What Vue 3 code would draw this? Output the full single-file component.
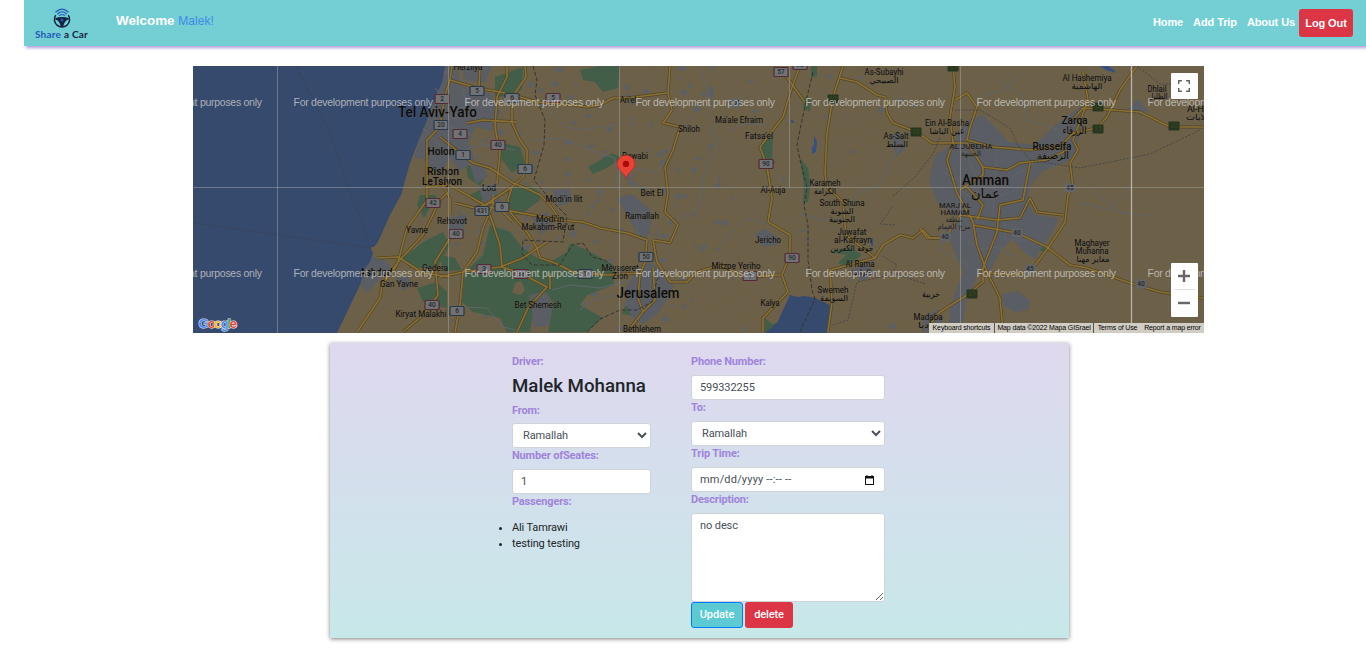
<script setup>
import { ref } from 'vue'

const from = ref('Ramallah')
const to = ref('Ramallah')
const phone = ref('599332255')
const seats = ref('1')
const description = ref('no desc')
const passengers = ['Ali Tamrawi', 'testing testing']

const green = [
  '495,77 523,67 522,90 508,96 495,97', '580,70 600,66 620,66 618,88 603,92 595,82 583,80',
  '503,143 520,147 525,163 512,173 500,157', '588,167 612,153 622,158 607,168 593,174',
  '507,187 530,186 540,192 540,200 520,215 510,214', '447,133 458,125 463,137 455,149',
  '466,166 480,164 487,175 480,186 468,178',
  '490,225 510,232 523,248 537,258 550,262 567,252 570,243 587,250 613,265 614,285 587,295 580,305 603,318 587,332 507,332 500,318 473,312 462,302 465,272 483,255',
  '420,195 437,195 424,218 417,205', '403,258 423,242 443,232 450,245 437,268 410,268', '417,288 437,282 447,292 447,308 423,302',
  '470,195 483,188 490,195 480,202', '440,255 455,258 462,270 443,271',
  '762,142 773,137 772,158 776,163 761,161', '811,66 817,66 817,76 811,78', '805,97 811,100 810,112 803,108',
  '800,158 808,168 810,187 808,202 803,204 804,187', '828,252 850,247 862,255 845,267 838,263 846,255',
  '765,318 772,324 780,322 775,332 764,332', '970,230 975,240 986,237 984,241 974,243', '1040,246 1047,245 1048,252 1040,251', '625,306 640,308 635,316 622,314'
]
const urban = [
  '444,66 457,66 460,86 490,93 500,112 492,131 476,127 468,143 475,160 460,171 449,158 441,175 423,159 414,158 420,137 428,117 437,95',
  '460,66 492,66 485,83 466,80', '470,165 483,163 487,177 476,184', '448,218 468,214 462,233 448,235', '478,187 495,184 500,202 486,207',
  '365,257 382,257 391,267 376,283 366,294 360,283', '396,277 408,276 412,284 402,291',
  '617,198 632,194 651,210 650,233 642,241 632,224', '625,290 637,270 650,262 662,271 674,284 667,299 658,313 643,324 632,318 627,305',
  '530,295 545,292 553,307 548,326 534,327', '552,190 570,189 572,202 558,206', '532,218 547,212 553,226 541,235',
  '755,235 764,228 781,240 776,246 762,246', '707,87 713,87 714,97 709,99', '890,134 902,133 905,149 896,157', '850,270 866,264 876,273 862,281',
  '935,155 952,145 966,121 983,115 998,130 1008,142 1035,145 1054,126 1070,114 1082,106 1084,121 1078,140 1075,158 1060,164 1041,172 1030,187 1028,203 1036,215 1058,218 1054,230 1040,250 1036,259 1026,254 1012,239 1001,250 990,271 979,270 973,286 966,303 961,332 948,332 950,307 963,272 953,248 945,230 956,216 937,203 929,180',
  '1002,294 1018,291 1030,301 1028,310 1014,312 1004,306', '1128,109 1138,99 1148,111 1143,116', '923,318 939,309 943,322 934,332 922,332'
]
// Open ground inside the forested hills.
const clearings = ['515,283 521,281 525,290 521,295 512,293', '529,296 545,291 553,303 548,333 530,333 533,313', '463,309 477,315 486,325 490,333 462,333']
const roads = [
  '452,66 450,80 477,88 500,92 520,97 537,102 573,105 587,107 600,105 613,98 627,98 667,93',
  '525,66 526,77 512,97 512,123 520,140 527,150 527,167 523,177 512,187 508,200 510,212 527,232 537,248 540,258 555,263 573,272 607,275 640,273',
  '440,137 460,153 473,163 490,168 513,183 530,190 540,195 550,205 560,220 583,222 600,228 627,233 647,240',
  '507,66 507,77 497,97 495,127 500,153 497,183', '467,123 483,120 517,122',
  '670,66 668,93 672,110 663,123 680,127 673,150 665,167 668,193 665,212 678,225 670,243 653,240',
  '493,195 493,205 483,228 477,252 463,272 460,305 455,332', '440,277 463,272 500,267 523,258 547,242', '490,215 500,245 502,267 520,273 547,287 528,308 517,332', '550,273 550,289',
  '647,240 645,262 640,275 638,298 643,312 627,332', '653,240 657,262 670,282 687,282 697,272 720,265 747,277 780,275', '653,267 655,300 643,312',
  '450,80 445,95 440,127 427,140 427,200 407,228 398,262 382,285 380,298 357,332', '377,258 398,257 423,273 450,277', '448,192 440,200 423,235 398,262 394,270', '450,238 435,262 438,295 423,315 403,332',
  '427,187 450,185 488,207 560,220', '455,203 475,208 493,202 513,222', '480,66 479,88', '512,187 485,205', '440,180 450,199 450,214',
  '800,66 792,87 783,117 760,147 767,167 772,198 768,222 790,235 790,255 782,275 788,292 763,318 763,332', '783,72 807,105',
  '843,66 833,97 827,133 825,173 827,187 843,202 846,235 860,246 875,258 830,270 832,302 828,332', '875,258 883,245 900,235 913,238 923,230 930,238 943,238',
  '840,78 857,82 877,95 885,97 887,113 893,123 917,132 932,143 967,143 983,167 1007,170 1020,163 1047,160 1067,150',
  '953,66 955,87 950,117 953,143 947,160 957,193 973,222 977,245 987,272 1000,298 1003,332',
  '955,100 967,93 977,107 970,127 967,140 993,147 1030,150 1060,147 1073,133 1097,128 1107,117 1120,90 1137,66',
  '1073,120 1083,108 1140,112 1170,127 1203,127', '1083,72 1088,100 1073,140 1078,150 1070,163 1073,187 1068,195 1065,222 1048,248 1033,268 1017,275 990,273',
  '960,190 983,175 983,167', '1030,163 1023,200 1000,205 997,232 983,268 983,282 967,295 940,312 927,328', '920,228 927,238 945,238 960,215 997,220 1020,218 1030,198 1037,212 1063,215',
  '973,225 1017,233 1047,247 1070,265 1087,268 1127,282 1160,292 1203,298', '967,187 983,205 977,220'
]
const borders = [
  '533,66 537,80 535,95 545,120 544,145 534,180 548,197 567,216 563,242 540,241 523,240 522,254 532,265 560,265 572,245 583,243 592,257 605,260 613,267',
  '587,332 600,319 620,310 637,310 652,302 657,280 665,270', '813,72 807,97 801,125 797,145 800,160 807,187 804,205 808,225 808,260 812,290 815,299 803,325 800,332'
]
const dotted = [
  '296,66 330,133 370,248', '193,223 280,235 372,248', '955,110 980,110 1010,128 1018,145 1030,160 1080,168 1150,154 1200,130', '1137,66 1160,84 1175,84',
  '893,206 880,224 895,225', '883,256 897,265 890,275 857,282 848,320 832,325', '890,272 925,284', '893,196 915,177 933,154 940,137'
]
const minor = [
  '450,105 470,109 490,105', '460,66 464,95 476,123', '440,125 463,130 485,145 515,150', '530,140 562,138 590,150 615,158 618,190', '545,105 564,126 580,130 620,124',
  '450,160 470,148 500,142', '620,180 638,168 652,173 668,160', '552,290 570,285 600,288 630,280', '463,307 487,308 503,327 520,331',
  '580,310 590,301 617,295', '620,210 635,217 640,239', '650,210 658,235 670,255', '700,68 709,90 710,120 718,148 705,170 698,208 680,219',
  '720,245 745,218 770,224', '730,130 745,123 766,125', '800,214 824,220 847,218', '845,215 858,193 880,185 890,162 903,143', '980,97 1003,90 1022,73', '1000,82 1022,94 1026,120 1060,130',
  '948,182 970,197 1000,196 1022,188', '965,238 980,249 995,247 1016,257', '968,265 940,250 941,225', '1078,202 1109,210 1129,188', '1090,190 1120,212 1152,216',
  '435,88 458,117', '430,110 457,119', '443,72 472,84', '423,128 446,151', '965,150 980,187', '997,155 993,215', '1012,177 1045,157', '940,170 995,201', '1005,220 1005,240 1030,240'
]

// [text, centre x, baseline y, size, drawn width]
const places = [
  ['Tel Aviv-Yafo', 437.5, 116.5, 13, 79], ['Herzliya', 468, 70, 8, 29], ['Holon', 441, 155, 9.5, 27], ['Rishon', 443, 174.5, 9.5, 32], ['LeTsiyon', 442, 185, 9.5, 40],
  ['Lod', 489, 191, 8, 14], ["Modi'in Ilit", 564, 202, 8, 37], ["Modi'in", 550, 222, 8, 28], ["Makabim-Re'ut", 548, 230, 8, 53], ['Rehovot', 452, 224, 8, 30],
  ['Yavne', 417, 233, 8, 22], ['Ashdod', 376, 276, 9.5, 33], ['Gan Yavne', 399, 287, 8, 38], ['Gedera', 435, 271, 8, 26], ['Kiryat Malakhi', 421, 317, 8, 51],
  ['Bet Shemesh', 538, 308, 8, 47], ["Ari'el", 628, 103, 8, 16], ['Rawabi', 635, 158.5, 8, 26], ['Shiloh', 689, 132, 8, 22], ['Beit El', 652, 196, 8, 23],
  ['Ramallah', 642, 218.5, 8, 34], ['Mevaseret', 620, 271, 8, 37], ['Zion', 620, 279, 8, 16], ['Jerusalem', 648, 298, 13, 63], ['Bethlehem', 642, 332, 8, 38],
  ["Ma'ale Efraim", 739, 123, 8, 48], ["Fatsa'el", 759, 138.5, 8, 28], ['Al-Auja', 773, 193, 8, 25], ['Karameh', 825, 186, 8, 31], ['الكرامة', 825, 194, 8, 22],
  ['As-Subayhi', 884, 75, 8, 39], ['الصبيحي', 884, 83, 8, 29], ['As-Salt', 896, 139, 8, 25], ['السلط', 897, 147, 8, 22], ['Ein Al-Basha', 947, 126, 8, 44], ['عين الباشا', 947, 134, 8, 35],
  ['Jericho', 768, 243, 8, 26], ['Mitzpe Yeriho', 736, 269, 8, 49], ['Kalya', 770, 306, 8, 19], ['South Shuna', 842, 206, 8, 45], ['الشونة', 842, 214, 8, 23], ['الجنوبية', 842, 222, 8, 26],
  ['Juwafat', 852, 235, 8, 29], ['al-Kafrayn', 853, 243, 8, 38], ['جوفة الكفرين', 852, 251, 8, 43], ['Al Rama', 860, 267, 8, 29], ['الرامة', 861, 275, 8, 20], ['Swemeh', 833, 293, 8, 31], ['السويمة', 834, 301, 8, 28],
  ['Al Hashemiya', 1087, 81, 8, 49], ['الهاشمية', 1087, 89, 8, 31], ['Dhlail', 1157, 91.5, 8, 19], ['الظليل', 1158, 99, 8, 19], ['Al-Hallabat', 1209, 112, 8, 44], ['الحلابات', 1202, 120, 8, 32],
  ['Zarqa', 1074.5, 124, 9.5, 26], ['الزرقاء', 1074.5, 134, 9.5, 24], ['Russeifa', 1052, 149.5, 9.5, 39], ['الرصيفة', 1053, 159, 9.5, 32],
  ['AL JUBEIHA', 971, 149, 7, 43], ['الجبيهة', 971, 156, 7, 20], ['Amman', 985.5, 185, 14, 47], ['عمان', 985.5, 198, 13, 29],
  ['MARJ AL', 955, 208, 7, 32], ['HAMAM', 955, 215, 7, 29], ['منطقة', 954, 222, 7, 17], ['مرج الحمام', 954, 229, 7, 33],
  ['Maghayer', 1092, 246, 8, 35], ['Muhanna', 1092, 254, 8, 33], ['مغاير مهنا', 1093, 262, 8, 33], ['خربية', 931, 297, 8, 18], ['Madaba', 928, 320, 8, 29], ['مأدبا', 928, 328, 8, 20]
]

// [label, centre x, centre y, kind]
const shields = [
  ['2', 442, 99, 'r'], ['20', 441, 125, 'b'], ['5', 477, 91, 'b'], ['6', 512, 98, 'b'], ['5', 553, 98, 'r'], ['4', 460, 134, 'r'], ['40', 498, 145, 'r'], ['1', 463, 155, 'b'], ['6', 525, 169, 'b'],
  ['42', 433, 203, 'r'], ['431', 482, 211, 'b'], ['6', 502, 207, 'b'], ['40', 456, 234, 'r'], ['3', 484, 269, 'r'], ['38', 521, 274, 'r'], ['1', 585, 274, 'b'], ['50', 646, 257, 'b'], ['40', 432, 305, 'r'], ['6', 457, 311, 'b'],
  ['57', 781, 72, 'r'], ['90', 800, 65, 'r'], ['90', 766, 164, 'r'], ['90', 792, 258, 'r'], ['1', 750, 276, 'r'], ['505', 735, 103, 'p'],
  ['65', 833, 99, 'g'], ['30', 916, 132, 'g'], ['35', 953, 67, 'g'], ['30', 1098, 107, 'g'], ['15', 1098, 129, 'g'], ['30', 1174, 126, 'g'], ['35', 972, 294, 'g'],
  ['45', 1070, 188, 'p'], ['40', 945, 237, 'p'], ['40', 1017, 233, 'p'], ['45', 1030, 269, 'p'], ['40', 1141, 284, 'p']
]
const shieldWidth = (s) => (s[3] === 'g' || s[3] === 'p' ? 11 : 14)

// Small settlements scattered over the land, from a fixed seed.
let seed = 11
const rand = () => ((seed = (seed * 16807) % 2147483647) / 2147483647)
const specks = Array.from({ length: 250 }, () => {
  const x = 425 + rand() * (rand() > 0.25 ? 290 : 500)
  const y = 66 + rand() * 266
  const w = 1.5 + rand() * 5
  const h = 1 + rand() * 3.5
  return `M${x} ${y}l${w} ${-h}l${w / 2} ${h}l${-w / 2} ${h * 0.8}z`
}).join('')
const hills = Array.from({ length: 110 }, () => {
  const x = 640 + rand() * 300
  const y = 66 + rand() * 266
  const w = 3 + rand() * 9
  return `M${x} ${y}l${w} ${-w * 0.5}l2 2z`
}).join('')

const marks = []
for (const y of [106, 276.5]) for (const x of [122.5, 293.5, 464.5, 635.5, 805.5, 976.5, 1147.5]) marks.push([x, y])
</script>

<template>
  <div class="page">
    <header class="navbar">
      <div class="brand">
        <svg class="brand-icon" width="20" height="21" viewBox="0 0 20 21" fill="none">
          <g stroke="#2458b8" stroke-width="1.1" stroke-linecap="round">
            <path d="M3.8 4Q10-1.8 16.200 4" /><path d="M5.600 6Q10 1.600 14.400 6" /><path d="M7.500 7.700Q10 5.300 12.500 7.700" />
          </g>
          <path d="M3.700 7.200a7.600 7.600 0 1 0 12.600 0" stroke="#14233f" stroke-width="1.500" />
          <path d="M3 10.200Q10 8 17 10.200L16.500 11.600Q12.500 12.500 11.200 18.800H8.800Q7.500 12.500 3.500 11.600z" fill="#14233f" />
          <circle cx="10" cy="11.900" r="1.500" fill="#2458b8" />
        </svg>
        <div class="brand-name"><span>Share</span> a Car</div>
      </div>
      <div class="welcome"><b>Welcome</b> <span>Malek!</span></div>
      <nav class="links">
        <a>Home</a><a>Add Trip</a><a>About Us</a>
        <button class="logout">Log Out</button>
      </nav>
    </header>

    <section class="map">
      <svg class="canvas" width="1011" height="267" viewBox="193 66 1011 267">
        <rect x="193" y="66" width="1011" height="267" fill="#6c6049" />
        <path :d="hills" fill="#70623e" opacity=".65" />
        <path :d="specks" fill="#5d5f62" />
        <polygon v-for="p in green" :key="p" :points="p" fill="#435e48" />
        <polygon v-for="p in clearings" :key="p" :points="p" fill="#6c6049" />
        <polygon v-for="p in urban" :key="p" :points="p" fill="#5a5d63" />
        <polygon points="193,66 445,66 442,83 437,93 428,117 424,128 420,137 410,163 401,195 390,215 378,242 374,247 370,247 373,253 370,262 365,268 360,285 337,333 193,333" fill="#364a6e" />
        <polygon points="790,295 798,297 805,296 815,298 830,305 827,333 765,333 777,323" fill="#364a6e" />
        <path d="M814 135l3 7-1 10-4 2 0-6 2-4zM791 120l2 0 1 3-3 0zM871 240l2-2v8l-2 0zM1100 66h8l6 4 2 3-10-3z" fill="#364f85" />
        <g fill="none" stroke="#60656b" stroke-width="1"><polyline v-for="p in minor" :key="p" :points="p" /></g>
        <g fill="none" stroke="#514528" stroke-width="3" stroke-linejoin="round"><polyline v-for="p in roads" :key="p" :points="p" /></g>
        <g fill="none" stroke="#8b7032" stroke-width="1.600" stroke-linejoin="round"><polyline v-for="p in roads" :key="p" :points="p" /></g>
        <g fill="none" stroke="#34342f" stroke-width="1" stroke-dasharray="4 2"><polyline v-for="p in borders" :key="p" :points="p" /></g>
        <g fill="none" stroke="#3c4048" stroke-width=".8" stroke-dasharray="2 1.5"><polyline v-for="p in dotted" :key="p" :points="p" /></g>
        <g v-for="(s, i) in shields" :key="'s' + i" :class="['shield', s[3]]">
          <rect :x="s[1] - shieldWidth(s) / 2" :y="s[2] - 4.5" :width="shieldWidth(s)" height="9" rx="1" />
          <text :x="s[1]" :y="s[2] + 2.4">{{ s[0] }}</text>
        </g>
        <text v-for="(p, i) in places" :key="'p' + i" class="place" :class="{ big: p[3] > 9, district: p[3] === 7, arabic: p[0] > '\u0600' }" :x="p[1]" :y="p[2]" :font-size="p[3] * 1.06" :textLength="p[4]" lengthAdjust="spacingAndGlyphs">{{ p[0] }}</text>
        <g stroke="#a2a4a3" stroke-opacity=".5" stroke-width="1">
          <path d="M277.5 66V333M448.5 66V333M619.5 66V333M789.5 66V187M960.5 66V333M193 187.5H1204" />
          <path d="M1131.5 66V333" stroke="#c2beb2" stroke-opacity=".9" stroke-width="1.3" />
        </g>
        <text v-for="(m, i) in marks" :key="'m' + i" class="mark" :x="m[0]" :y="m[1]" textLength="139.500">For development purposes only</text>
        <path d="M626 179C625 172 617.200 170.500 617.200 164A8.800 8.800 0 0 1 634.800 164C634.800 170.500 627 172 626 179z" fill="#ea4335" stroke="#c5221f" stroke-width=".6" />
        <circle cx="626" cy="163.900" r="3.200" fill="#a50e0e" />
        <text class="google" x="198.500" y="327.500" textLength="38.500"><tspan fill="#4c8bf5">G</tspan><tspan fill="#e94b3c">o</tspan><tspan fill="#f6bd27">o</tspan><tspan fill="#4c8bf5">g</tspan><tspan fill="#3ba65a">l</tspan><tspan fill="#e94b3c">e</tspan></text>
      </svg>
      <button class="fullscreen" aria-label="Toggle fullscreen view">
        <svg width="12" height="12" viewBox="0 0 12 12" fill="none" stroke="#666" stroke-width="1.500"><path d="M.75 4V.75H4M8 .75h3.250V4M11.250 8v3.250H8M4 11.250H.75V8" /></svg>
      </button>
      <div class="zoom">
        <button aria-label="Zoom in"><svg width="12" height="12"><path d="M0 6H12M6 0V12" stroke="#666" stroke-width="2.400" /></svg></button>
        <i></i>
        <button aria-label="Zoom out"><svg width="12" height="12"><path d="M0 6H12" stroke="#666" stroke-width="2.400" /></svg></button>
      </div>
      <div class="credits">
        <span class="c1">Keyboard shortcuts</span><span class="c2">Map data ©2022 Mapa GISrael</span><span class="c3">Terms of Use</span><span class="c4">Report a map error</span>
      </div>
    </section>

    <form class="card" @submit.prevent>
      <div class="col left">
        <label>Driver:</label>
        <h5>Malek Mohanna</h5>
        <label>From:</label>
        <select v-model="from"><option>Ramallah</option></select>
        <label>Number ofSeates:</label>
        <input v-model="seats" type="text" />
        <label>Passengers:</label>
        <ul><li v-for="p in passengers" :key="p">{{ p }}</li></ul>
      </div>
      <div class="col right">
        <label>Phone Number:</label>
        <input v-model="phone" type="text" />
        <label>To:</label>
        <select v-model="to"><option>Ramallah</option></select>
        <label>Trip Time:</label>
        <div class="datetime" tabindex="0">
          <span>mm/dd/yyyy --:-- --</span>
          <svg width="9" height="10" viewBox="0 0 9 10"><path d="M1.500 0h1v1h4V0h1v1H9v9H0V1h1.500zM1 3.500V9h7V3.500z" fill="#111" fill-rule="evenodd" /></svg>
        </div>
        <label>Description:</label>
        <textarea v-model="description"></textarea>
        <div class="actions">
          <button class="update">Update</button>
          <button class="delete">delete</button>
        </div>
      </div>
    </form>
  </div>
</template>

<style>
body { background: #fff; overflow: hidden; }
</style>

<style scoped>
* { box-sizing: border-box; }
.page { height: 653px; font-family: Roboto, "Liberation Sans", sans-serif; font-size: 11px; color: #212529; overflow: hidden; }
button { font: inherit; border: 0; padding: 0; }

.navbar { display: flex; align-items: flex-start; height: 46px; margin-left: 24px; padding-right: 13px; background: #73cfd3; box-shadow: 2px 2px 3px #b39ddb; font-family: "Liberation Sans", Arial, sans-serif; }
.brand { width: 75px; padding-top: 8px; display: flex; flex-direction: column; align-items: center; }
.brand-name { font: bold 10px/11px Lato, sans-serif; letter-spacing: .25px; color: #14233f; white-space: nowrap; }
.brand-name span { color: #2458b8; }
.brand-icon { display: block; }
.welcome { margin: 12px 0 0 17px; font-size: 13.4px; line-height: 17px; color: #fff; }
.welcome span { color: #3f8ae8; font-size: 12.1px; }
.links { display: flex; margin-left: auto; padding-top: 9px; color: #fff; font-weight: bold; font-size: 11px; line-height: 27px; letter-spacing: -.1px; }
.links a { margin-right: 10px; }
.links a:nth-child(3) { margin-right: 4px; }
.logout { width: 54px; height: 28px; border-radius: 3px; background: #dc3545; color: #fff; letter-spacing: -.1px; }

.map { position: relative; width: 1011px; height: 267px; margin: 20px 0 0 193px; overflow: hidden; }
.canvas { display: block; }
.place { text-anchor: middle; fill: #0c0c0c; font-family: Roboto, "DejaVu Sans", sans-serif; paint-order: stroke; stroke: #6a6250; stroke-width: 1px; stroke-opacity: .4; }
.place.big { font-weight: 500; }
.place.district { fill: #202225; font-weight: 500; }
.place.arabic { font-family: "DejaVu Sans", sans-serif; font-weight: 400; }
.mark { font: 10.500px "Liberation Sans", Arial, sans-serif; fill: #d2d1cc; fill-opacity: .78; }
.shield text { font: 500 6.500px Roboto, sans-serif; text-anchor: middle; fill: #242930; }
.shield rect { fill: #717274; stroke-width: 1.200px; }
.shield.b rect { stroke: #28384b; }
.shield.r rect { stroke: #542936; }
.shield.g rect { fill: #263621; stroke: none; }
.shield.g text { fill: #3b431f; }
.shield.p rect { fill: #626466; stroke: none; }
.google { font: bold 13.500px "Liberation Sans", Arial, sans-serif; paint-order: stroke; stroke: #e6e9ef; stroke-width: 1px; }
.fullscreen { position: absolute; right: 6px; top: 7px; width: 27px; height: 26px; padding-right: 1px; display: grid; place-items: center; background: #fff; border-radius: 1px; }
.zoom { position: absolute; right: 6px; top: 197px; width: 27px; height: 54px; background: #fff; border-radius: 1px; display: flex; flex-direction: column; align-items: center; }
.zoom button { width: 27px; height: 26px; padding-right: 1px; display: grid; place-items: center; background: none; }
.zoom i { width: 20px; height: 1px; background: #e0e0e0; }
.credits { position: absolute; right: 0; bottom: 0; display: flex; width: 275px; height: 10px; background: #d1cdc4; font: 7px/10px "Liberation Sans", Arial, sans-serif; letter-spacing: -.14px; color: #000; white-space: nowrap; }
.credits span { text-align: center; }
.c1, .c2 { border-right: 1px solid #555; }
.c1 { width: 66px; }
.c2 { width: 99px; }
.c3 { width: 47px; }
.c4 { width: 63px; }

.card { display: flex; width: 739px; height: 295px; margin: 10px 0 0 330px; padding: 11px 0 0 182px; background: linear-gradient(#dfd8ef, #c7e8e9); box-shadow: 0 1px 4px rgba(0, 0, 0, .5); border-radius: 1px; }
.col { display: flex; flex-direction: column; }
.left { width: 139px; margin-right: 40px; }
.right { width: 194px; }
label { height: 21px; flex: none; padding-top: 1px; line-height: 14px; font-weight: bold; letter-spacing: -.17px; color: #a084dc; }
h5 { height: 27px; margin: 0; padding-top: 1px; font-size: 18.700px; line-height: 21px; font-weight: 500; white-space: nowrap; }
.left h5 + label { padding-top: 2px; }
input, select, textarea, .datetime { width: 100%; height: 25px; flex: none; margin: 0; border: 1px solid #ced4da; border-radius: 3px; background: #fff; color: #495057; font: 11px/16px Roboto, sans-serif; letter-spacing: -.1px; padding: 3px 8px; outline: 0; }
select { padding: 3px 6px; }
.datetime { display: flex; align-items: center; justify-content: space-between; padding-right: 10px; letter-spacing: .18px; white-space: nowrap; }
textarea { height: 89px; padding-top: 4px; resize: both; display: block; }
ul { margin: 5px 0 0; padding: 0; line-height: 16px; letter-spacing: -.14px; }
.actions { display: flex; gap: 2px; }
.actions button { height: 26px; padding-bottom: 2px; border-radius: 3px; color: #fff; font-weight: 500; letter-spacing: -.1px; }
.actions .update { width: 52px; background: #5bcad3; border: 1px solid #007bff; }
.actions .delete { width: 48px; background: #dc3545; }
</style>
